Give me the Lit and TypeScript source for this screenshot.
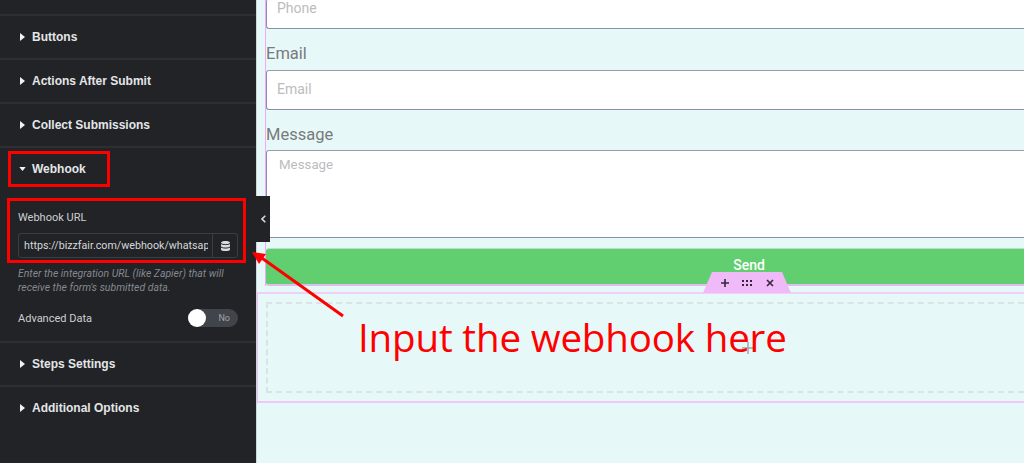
import { LitElement, html, css } from "lit";
import { customElement } from "lit/decorators.js";

@customElement("app-root")
export class AppRoot extends LitElement {
  static styles = css`
    :host { display: block; width: 1024px; height: 463px; overflow: hidden; position: relative; font-family: Roboto, "Liberation Sans", sans-serif; }
    * { box-sizing: border-box; }
    .page { display: flex; height: 463px; background: #e7f8f9; }
    .side { width: 257px; flex: none; background: #212326; padding-top: 14px; color: #e6e8ea; border-right: 1px solid #cfd6d8; }
    .row { height: 44px; border-top: 2px solid #2d2f33; display: flex; align-items: center; padding-left: 20px; gap: 7px; font: 700 12px "Liberation Sans", Arial, sans-serif; color: #e4e6e8; }
    .caret { width: 5px; height: 8px; flex: none; fill: #f2f3f4; }
    .caret.open { width: 7px; height: 4px; margin-left: -1px; margin-right: -1px; }
    .hook { height: 151px; padding: 0 18px; }
    .lab { font-size: 11px; line-height: 14px; color: #ccd0d4; padding-top: 21px; height: 35px; }
    .url { margin-top: 8px; height: 25px; width: 220px; border: 1px solid #3a3d42; border-radius: 3px; display: flex; }
    .url span { flex: 1; min-width: 0; overflow: hidden; white-space: nowrap; font-size: 10.7px; line-height: 23px; padding-left: 5px; margin-right: 4px; color: #d5d8db; }
    .db { width: 25px; flex: none; border-left: 1px solid #3a3d42; display: flex; align-items: center; justify-content: center; }
    .db svg { width: 9px; height: 10px; fill: #d8dadd; }
    .help { margin-top: 9px; font-size: 10.45px; line-height: 14px; font-style: italic; color: #85898f; width: 226px; }
    .adv { display: flex; align-items: center; justify-content: space-between; width: 220px; margin-top: 14px; font-size: 11px; color: #ccd0d4; height: 18px; }
    .toggle { width: 50px; height: 18px; border-radius: 9px; background: #41454b; display: flex; align-items: center; justify-content: space-between; font-size: 9px; color: #a0a4a9; padding-right: 8px; }
    .knob { width: 18px; height: 18px; border-radius: 50%; background: #fff; }
    .canvas { flex: 1; min-width: 0; display: flex; flex-direction: column; }
    .s1 { height: 286px; margin-left: 8px; border-left: 1px solid #f0a9fb; display: flex; flex-direction: column; }
    .input { background: #fff; border: 1px solid #8d8fa8; border-right: none; border-top-color: #9a9cb0; border-radius: 3px 0 0 3px; font-size: 14px; color: #bcbcbc; padding-left: 10px; }
    .phone { height: 30px; border-top: none; line-height: 18px; margin-top: -1px; }
    .label { font-size: 16.5px; line-height: 20px; color: #7a7a7a; height: 41px; padding-top: 15px; }
    .email { height: 40px; line-height: 36px; }
    .label.m { height: 40px; padding-top: 15px; }
    .msg { height: 88px; font-size: 13.3px; padding-left: 12px; padding-top: 6px; }
    .send { margin-top: 10px; height: 38px; background: #61ce70; border-top: 1px solid #b5e3c4; border-bottom: 2px solid #e0bdf0; color: #fff; font-weight: 500; font-size: 14px; text-align: center; line-height: 33px; padding-left: 208px; border-radius: 3px 0 0 3px; }
    .s2 { margin-top: 6px; height: 111px; border-top: 2px solid #f0d0f8; border-bottom: 2px solid #f0c8f8; border-left: 1px solid #f0bdf8; padding: 8px 0 8px 8px; display: flex; }
    .drop { flex: 1; border: 2px dashed #dbe4e5; border-right: none; }
    .tabs { position: absolute; left: 703px; top: 272px; width: 88px; height: 21px; background: #f0baf9; clip-path: polygon(9px 0, 79px 0, 88px 100%, 0 100%); display: flex; align-items: center; justify-content: center; gap: 12.5px; padding: 0 12px; }
    .tabs svg { width: 10px; height: 10px; flex: none; stroke: #33283a; stroke-width: 1.6; fill: none; }
    .plus { position: absolute; left: 742px; top: 342px; width: 12px; height: 12px; }
    .plus svg { display: block; stroke: #9aa5a8; stroke-width: 1.4; }
    .collapse { position: absolute; left: 256px; top: 196px; width: 14px; height: 46px; background: #212326; display: flex; align-items: center; justify-content: center; }
    .collapse svg { width: 5px; height: 8px; stroke: #d5d7da; stroke-width: 1.6; fill: none; }
    .box { position: absolute; border: 3px solid #f00; pointer-events: none; }
    .b1 { left: 8px; top: 151px; width: 102px; height: 36px; }
    .b2 { left: 7px; top: 198px; width: 239px; height: 65px; }
    .arrow { position: absolute; left: 250px; top: 245px; width: 110px; height: 90px; overflow: visible; }
    .note { position: absolute; left: 358px; top: 312px; font: 400 38.5px "Open Sans", "Noto Sans", sans-serif; letter-spacing: -0.15px; line-height: 50px; color: #f00; white-space: nowrap; }
  `;

  caret() {
    return html`<svg class="caret" viewBox="0 0 5 8"><path d="M0 0l5 4-5 4z"/></svg>`;
  }
  row(t: string) {
    return html`<div class="row">${this.caret()}<span>${t}</span></div>`;
  }

  render() {
    return html`
      <div class="page">
        <aside class="side">
          ${this.row("Buttons")}
          ${this.row("Actions After Submit")}
          ${this.row("Collect Submissions")}
          <div class="row"><svg class="caret open" viewBox="0 0 8 5"><path d="M0 0h8l-4 5z"/></svg><span>Webhook</span></div>
          <div class="hook">
            <div class="lab">Webhook URL</div>
            <div class="url">
              <span>https://bizzfair.com/webhook/whatsapp</span>
              <div class="db"><svg viewBox="0 0 9 10"><path d="M0 1.6C0 .6 2 0 4.5 0S9 .6 9 1.6 7 3.2 4.5 3.2 0 2.6 0 1.6zM0 3c1 .8 2.700 1.100 4.500 1.100S8 3.800 9 3v2c0 1-2 1.600-4.500 1.600S0 6 0 5zM0 6.500c1 .8 2.700 1.100 4.500 1.100S8 7.300 9 6.500v1.900C9 9.400 7 10 4.500 10S0 9.400 0 8.400z"/></svg></div>
            </div>
            <div class="help">Enter the integration URL (like Zapier) that will receive the form's submitted data.</div>
            <div class="adv"><span>Advanced Data</span><div class="toggle"><div class="knob"></div><span>No</span></div></div>
          </div>
          ${this.row("Steps Settings")}
          ${this.row("Additional Options")}
        </aside>
        <main class="canvas">
          <section class="s1">
            <div class="input phone">Phone</div>
            <div class="label">Email</div>
            <div class="input email">Email</div>
            <div class="label m">Message</div>
            <div class="input msg">Message</div>
            <div class="send">Send</div>
          </section>
          <section class="s2"><div class="drop"></div></section>
        </main>
      </div>
      <div class="tabs">
        <svg viewBox="0 0 10 10"><path d="M5 1v8M1 5h8"/></svg>
        <svg viewBox="0 0 10 10" style="stroke:none;fill:#33283a"><path d="M0 2h2v2H0zM4 2h2v2H4zM8 2h2v2H8zM0 6h2v2H0zM4 6h2v2H4zM8 6h2v2H8z"/></svg>
        <svg viewBox="0 0 10 10"><path d="M2 2l6 6M8 2l-6 6"/></svg>
      </div>
      <div class="plus"><svg viewBox="0 0 12 12" width="12" height="12"><path d="M6 0v12M0 6h12"/></svg></div>
      <div class="collapse"><svg viewBox="0 0 5 8"><path d="M4.300.7L1 4l3.300 3.300"/></svg></div>
      <div class="box b1"></div>
      <div class="box b2"></div>
      <svg class="arrow" viewBox="0 0 110 90"><path d="M9 11L93 71" stroke="#f00" stroke-width="3" fill="none"/><path d="M2 7L16 9 9 19z" fill="#f00"/></svg>
      <div class="note">Input the webhook here</div>
    `;
  }
}
